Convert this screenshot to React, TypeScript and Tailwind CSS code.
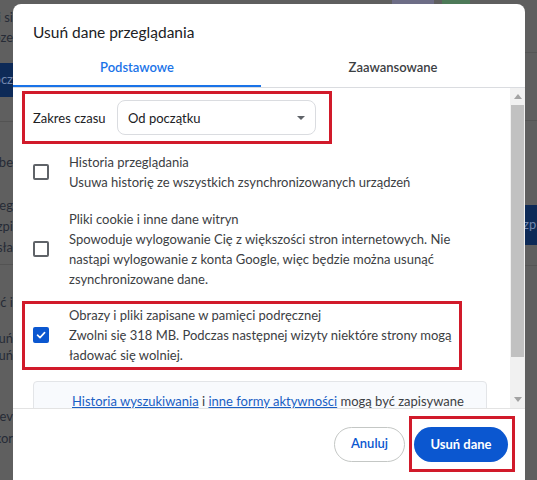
import React from "react";

function Checkbox({ checked }: { checked?: boolean }) {
  if (checked) {
    return (
      <div className="w-[16px] h-[16px] shrink-0 rounded-[2px] bg-[#0b57d0] flex items-center justify-center">
        <svg width="12" height="12" viewBox="0 0 12 12">
          <path d="M2.5 6.2 L5 8.6 L9.6 3.6" fill="none" stroke="white" strokeWidth="1.6" strokeLinecap="round" strokeLinejoin="round" />
        </svg>
      </div>
    );
  }
  return <div className="w-[16px] h-[16px] shrink-0 rounded-[2px] border-2 border-[#5f6368]" />;
}

function Tri({ up }: { up?: boolean }) {
  return (
    <svg width="8" height="5" viewBox="0 0 8 5">
      <path d={up ? "M0 5 L4 0 L8 5 Z" : "M0 0 L8 0 L4 5 Z"} fill="#a3a3a3" />
    </svg>
  );
}

function Frag({ text, h, cls = "" }: { text: string; h: string; cls?: string }) {
  return (
    <div className={`flex justify-end overflow-hidden whitespace-nowrap items-center ${h} ${cls}`}>
      <span className="shrink-0">{text}</span>
    </div>
  );
}

export default function App() {
  return (
    <div className="w-[537px] h-[480px] overflow-hidden bg-[#5f5f5f] flex font-['Lato','Noto_Sans',sans-serif] text-[13px]">
      {/* left strip of background page */}
      <div className="w-[13px] shrink-0 flex flex-col text-[#262b36]">
        <div className="h-[8px]" />
        <Frag text="wi si" h="h-[20px]" />
        <Frag text="oze" h="h-[20px]" />
        <div className="h-[15px]" />
        <div className="h-[34px] bg-[#0d2a57] flex justify-end items-center overflow-hidden whitespace-nowrap text-[#7186ad]">
          <span className="shrink-0">Rozpocz</span>
        </div>
        <div className="h-[24px]" />
        <div className="h-[1px] bg-[#535353]" />
        <div className="h-[31px]" />
        <Frag text="obe" h="h-[20px]" />
        <div className="h-[22px]" />
        <Frag text="reg" h="h-[21px]" />
        <Frag text="ozpi" h="h-[21px]" />
        <Frag text="usła" h="h-[21px]" />
        <div className="h-[6px]" />
        <div className="h-[1px] bg-[#535353]" />
        <div className="h-[28px]" />
        <Frag text="ść i" h="h-[20px]" />
        <div className="h-[17px]" />
        <Frag text="suń" h="h-[17px]" />
        <Frag text="suń" h="h-[17px]" />
        <div className="h-[42px]" />
        <Frag text="rzev" h="h-[22px]" />
        <Frag text="kor" h="h-[22px]" />
      </div>

      {/* center column */}
      <div className="w-[512px] shrink-0 flex flex-col">
        <div className="h-[4px] shrink-0 flex">
          <div className="ml-[379px] w-[42px] h-[4px] bg-[#6d6d86]" />
          <div className="ml-[8px] w-[28px] h-[4px] bg-[#4d7a58]" />
        </div>
        <div className="flex-1 bg-white rounded-t-[8px] flex flex-col min-h-0">
          {/* title */}
          <div className="h-[46px] shrink-0 pl-[20px] pt-[17px] text-[15.5px] leading-[22px] text-[#202124]">
            Usuń dane przeglądania
          </div>
          {/* tabs */}
          <div className="h-[38px] shrink-0 flex border-b border-[#dadce0]">
            <div className="w-[248px] flex items-center justify-center border-b-[2px] border-[#1a73e8] text-[#1a73e8] font-semibold">
              Podstawowe
            </div>
            <div className="flex-1 flex items-center justify-center text-[#3c4043] font-semibold pb-[2px]">
              Zaawansowane
            </div>
          </div>
          {/* scroll area */}
          <div className="h-[320px] shrink-0 flex">
            <div className="flex-1 min-w-0 overflow-hidden flex flex-col text-[#3c4043] leading-[20px]">
              <div className="mt-[3px] ml-[9px] w-[310px] h-[53px] shrink-0 border-[3px] border-[#d11a2a] flex items-center pl-[8px]">
                <div className="w-[84px] shrink-0 text-[#202124]">Zakres czasu</div>
                <div className="w-[199px] h-[35px] shrink-0 border border-[#dadce0] rounded-[8px] flex items-center justify-between pl-[10px] pr-[10px] text-[#202124]">
                  <span>Od początku</span>
                  <svg width="8" height="4" viewBox="0 0 8 4">
                    <path d="M0 0 L8 0 L4 4 Z" fill="#5f6368" />
                  </svg>
                </div>
              </div>

              <div className="mt-[8px] pl-[20px] flex items-center shrink-0">
                <Checkbox />
                <div className="ml-[20px]">
                  <div>Historia przeglądania</div>
                  <div>Usuwa historię ze wszystkich zsynchronizowanych urządzeń</div>
                </div>
              </div>

              <div className="mt-[17px] pl-[20px] flex items-center shrink-0">
                <Checkbox />
                <div className="ml-[20px] w-[400px]">
                  <div>Pliki cookie i inne dane witryn</div>
                  <div>
                    Spowoduje wylogowanie Cię z większości stron internetowych. Nie
                    <br />
                    nastąpi wylogowanie z konta Google, więc będzie można usunąć
                    <br />
                    zsynchronizowane dane.
                  </div>
                </div>
              </div>

              <div className="mt-[12px] ml-[9px] w-[440px] shrink-0 border-[3px] border-[#d11a2a] pl-[8px] pt-[1px] pb-[2px] flex items-center">
                <Checkbox checked />
                <div className="ml-[20px]">
                  <div>Obrazy i pliki zapisane w pamięci podręcznej</div>
                  <div>
                    Zwolni się 318 MB. Podczas następnej wizyty niektóre strony mogą
                    <br />
                    ładować się wolniej.
                  </div>
                </div>
              </div>

              <div className="mt-[11px] ml-[20px] w-[454px] shrink-0 border border-[#e3e5e8] rounded-[4px] bg-[#f8fafd] pt-[9px] pb-[9px] pl-[38px] pr-[12px]">
                <span className="text-[#1a5fc4] underline">Historia wyszukiwania</span> i{" "}
                <span className="text-[#1a5fc4] underline">inne formy aktywności</span> mogą być zapisywane
                <br />
                na Twoim koncie Google, gdy jesteś zalogowany.
              </div>
            </div>
            {/* scrollbar */}
            <div className="w-[15px] shrink-0 bg-[#f1f1f1] flex flex-col">
              <div className="h-[17px] flex items-center justify-center">
                <Tri up />
              </div>
              <div className="h-[252px] mx-[1px] bg-[#c1c1c1]" />
              <div className="flex-1" />
              <div className="h-[17px] flex items-center justify-center">
                <Tri />
              </div>
            </div>
          </div>
          {/* footer */}
          <div className="flex-1 border-t border-[#e3e3e3] flex justify-end items-start pt-[7px] pr-[10px]">
            <div className="flex items-center">
              <div className="w-[71px] h-[35px] mr-[4px] rounded-full border border-[#c4c7c5] flex items-center justify-center text-[#0b57d0] font-semibold">
                Anuluj
              </div>
              <div className="border-[3px] border-[#d11a2a] pl-[2px] pr-[4px] pt-[8px] pb-[7px]">
                <div className="w-[94px] h-[35px] rounded-full bg-[#0b57d0] flex items-center justify-center text-white font-bold">
                  Usuń dane
                </div>
              </div>
            </div>
          </div>
        </div>
      </div>

      {/* right strip */}
      <div className="flex-1 flex flex-col text-[#7186ad]">
        <div className="h-[52px]" />
        <div className="h-[1px] bg-[#555555]" />
        <div className="h-[67px]" />
        <div className="h-[1px] bg-[#555555]" />
        <div className="h-[84px]" />
        <div className="h-[40px] bg-[#0d2a57] flex items-center overflow-hidden whitespace-nowrap">
          <span className="shrink-0 -ml-[2px]">zp</span>
        </div>
        <div className="h-[20px]" />
        <div className="h-[1px] bg-[#555555]" />
      </div>
    </div>
  );
}
